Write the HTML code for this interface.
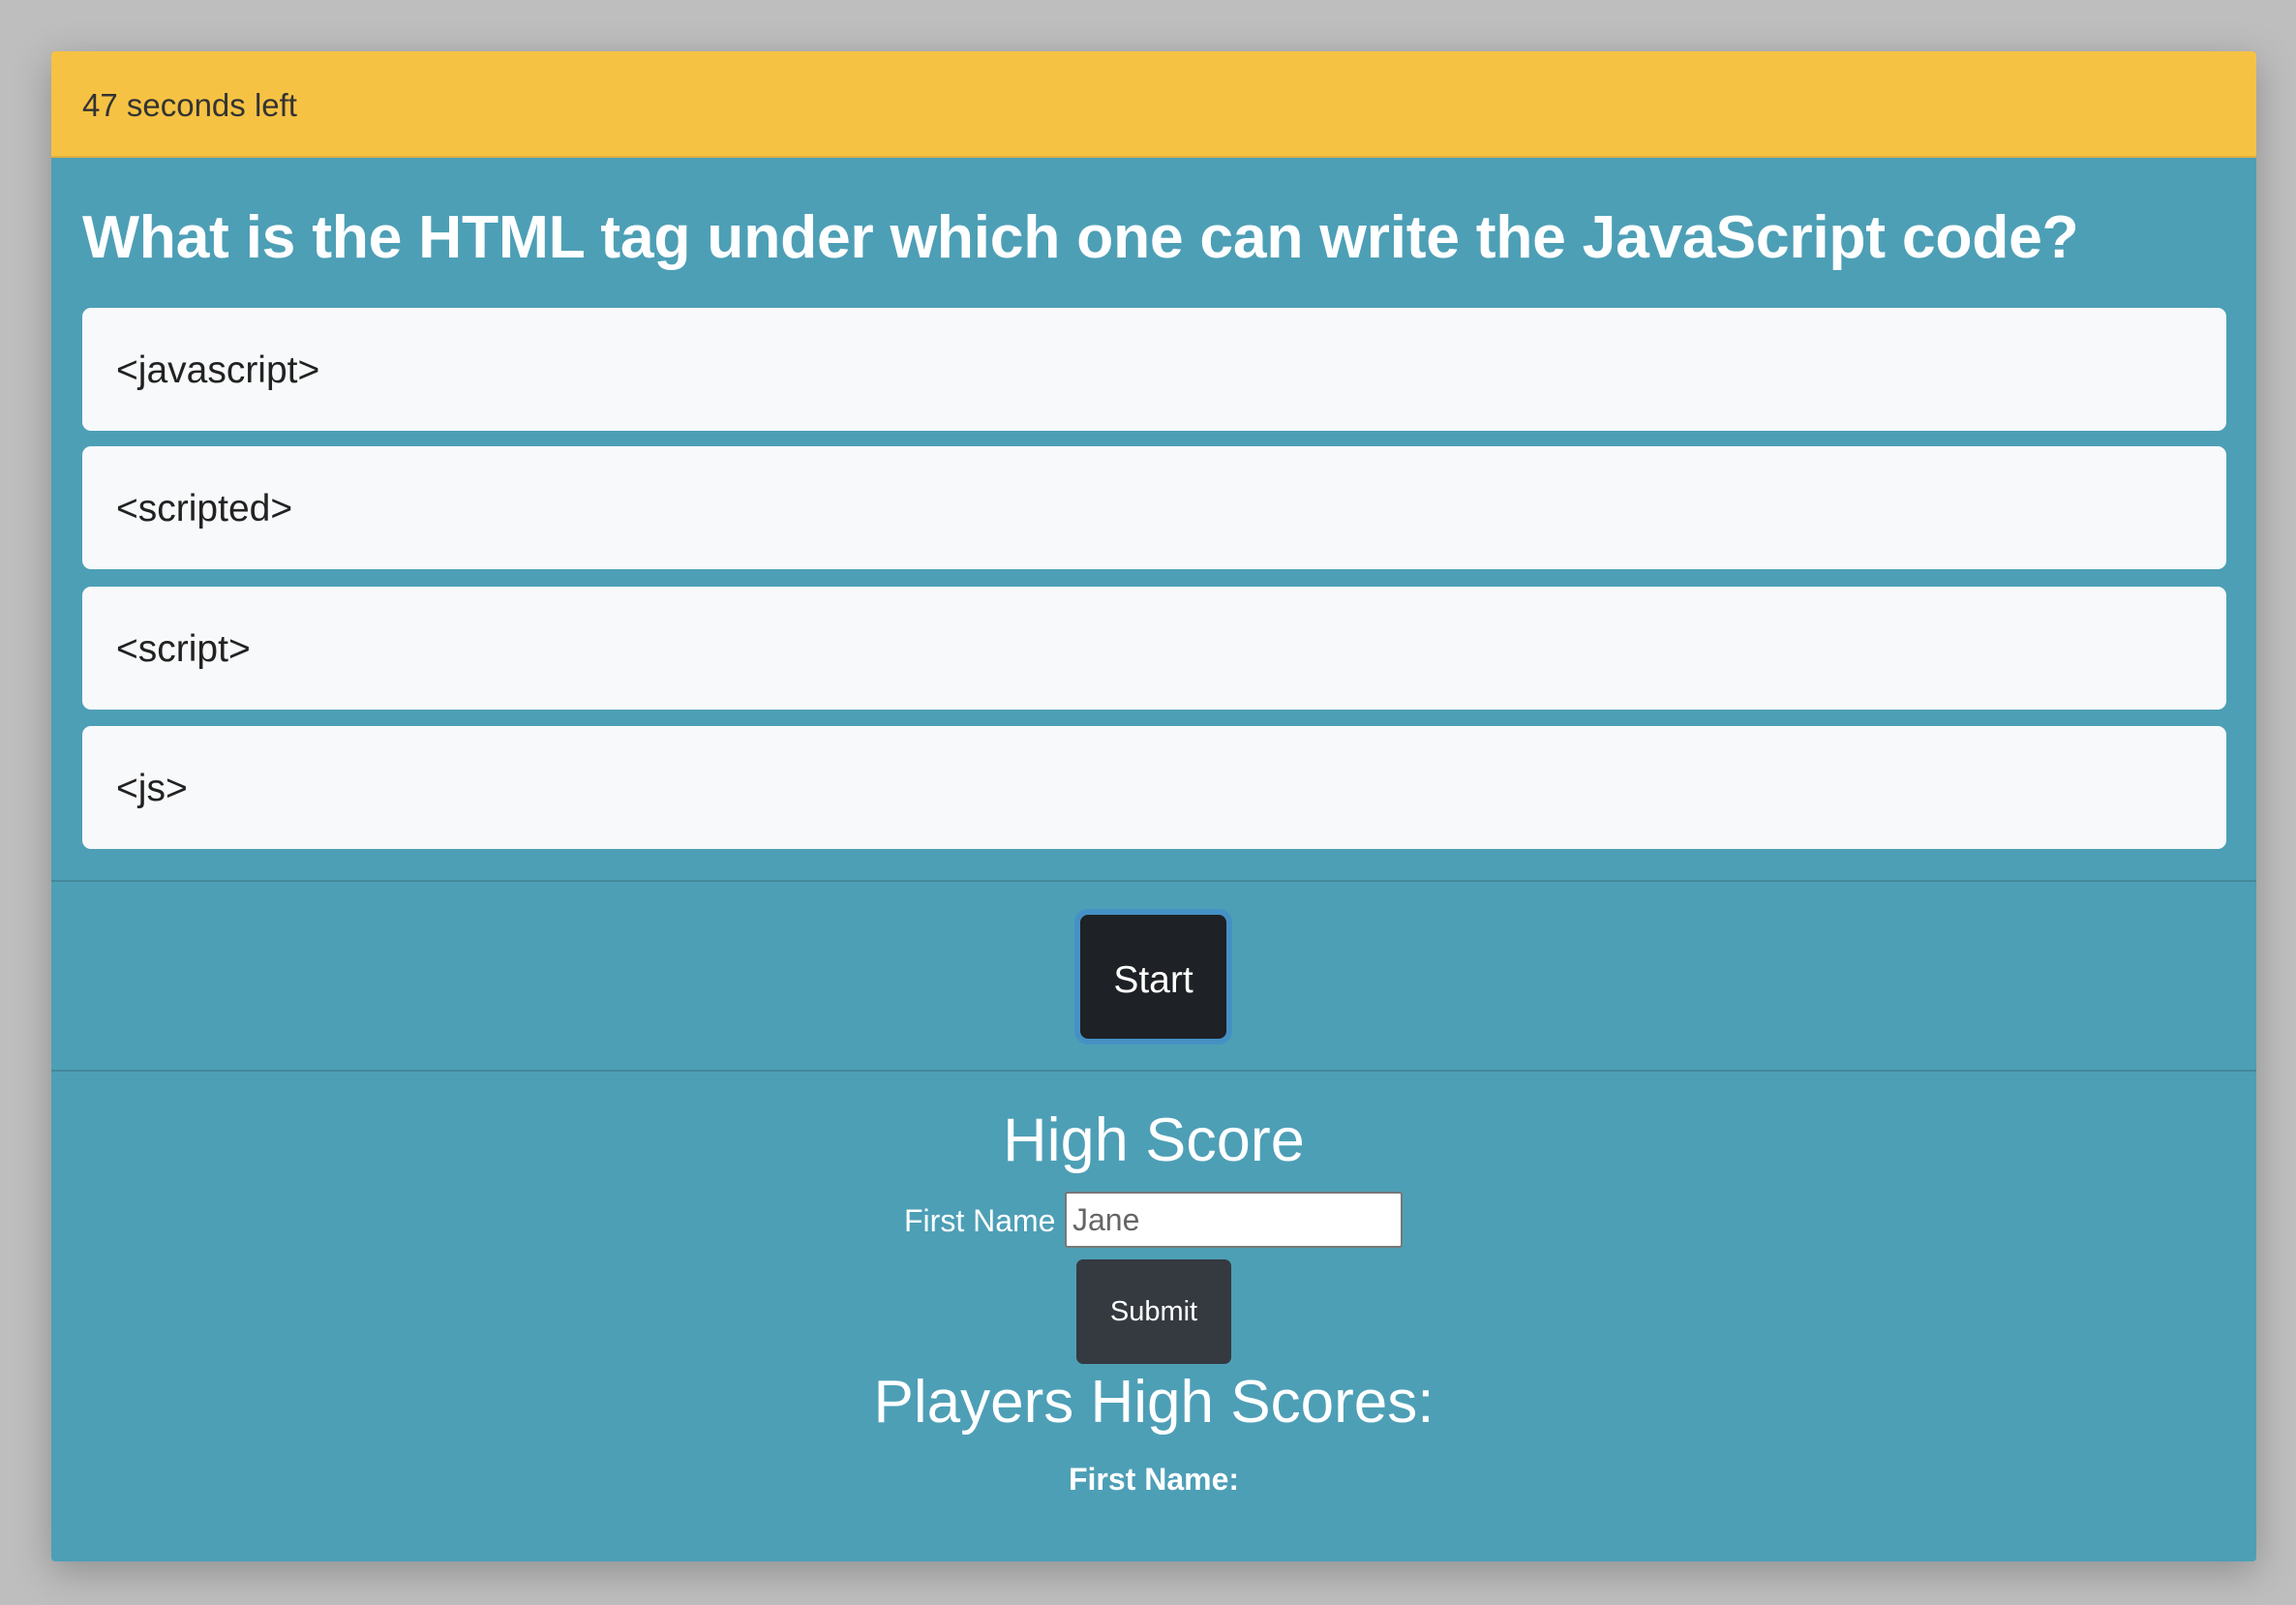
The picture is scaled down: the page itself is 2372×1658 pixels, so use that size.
<!DOCTYPE html>
<html><head><meta charset="utf-8"><style>
*{box-sizing:border-box;margin:0;padding:0}
body{width:2372px;height:1658px;background:#bebebe;font-family:"Liberation Sans",sans-serif;position:relative;overflow:hidden}
.card{position:absolute;left:53px;top:53px;width:2278px;height:1560px;background:#4d9fb6;box-shadow:0 10px 40px rgba(0,0,0,.25);border-radius:4px;overflow:hidden}
.hdr{position:absolute;left:0;top:0;width:100%;height:110px;background:#f6c243;border-bottom:2px solid #e0b040}
.hdr span{position:absolute;left:32px;top:37px;font-size:33px;color:#333}
.q{position:absolute;left:32px;top:156px;font-size:62.5px;font-weight:bold;color:#fff;white-space:nowrap;letter-spacing:-0.3px}
.opt{position:absolute;left:32px;width:2215px;height:127px;background:#f8f9fa;border-radius:9px;font-size:39px;color:#222;padding:43px 0 0 35px}
.hr{position:absolute;left:0;width:100%;height:2px;background:#44889c}
.start{position:absolute;left:1057px;top:886px;width:163px;height:140px;border:6px solid #4591c4;border-radius:14px;background:#1e2125;color:#fff;font-size:39px;text-align:center;line-height:136px}
.c{position:absolute;left:0;width:100%;text-align:center;color:#fff}
.inp{position:absolute;left:1047px;top:1178px;width:349px;height:58px;background:#fff;border:2px solid #777;border-radius:3px;font-size:32px;color:#666;padding:9px 0 0 6px}
.sub{position:absolute;left:1059px;top:1248px;width:160px;height:108px;background:#343a40;border-radius:7px;color:#fff;font-size:29px;text-align:center;line-height:108px}
</style></head><body>
<div class="card">
<div class="hdr"><span>47 seconds left</span></div>
<div class="q">What is the HTML tag under which one can write the JavaScript code?</div>
<div class="opt" style="top:265px">&lt;javascript&gt;</div>
<div class="opt" style="top:408px">&lt;scripted&gt;</div>
<div class="opt" style="top:553px">&lt;script&gt;</div>
<div class="opt" style="top:697px">&lt;js&gt;</div>
<div class="hr" style="top:856px"></div>
<div class="start">Start</div>
<div class="hr" style="top:1052px"></div>
<div class="c" style="top:1089px;font-size:63px">High Score</div>
<div style="position:absolute;left:881px;top:1190px;font-size:32px;color:#fff">First Name</div>
<div class="inp">Jane</div>
<div class="sub">Submit</div>
<div class="c" style="top:1360px;font-size:62px">Players High Scores:</div>
<div class="c" style="top:1457px;font-size:32px;font-weight:bold">First Name:</div>
</div>
</body></html>
